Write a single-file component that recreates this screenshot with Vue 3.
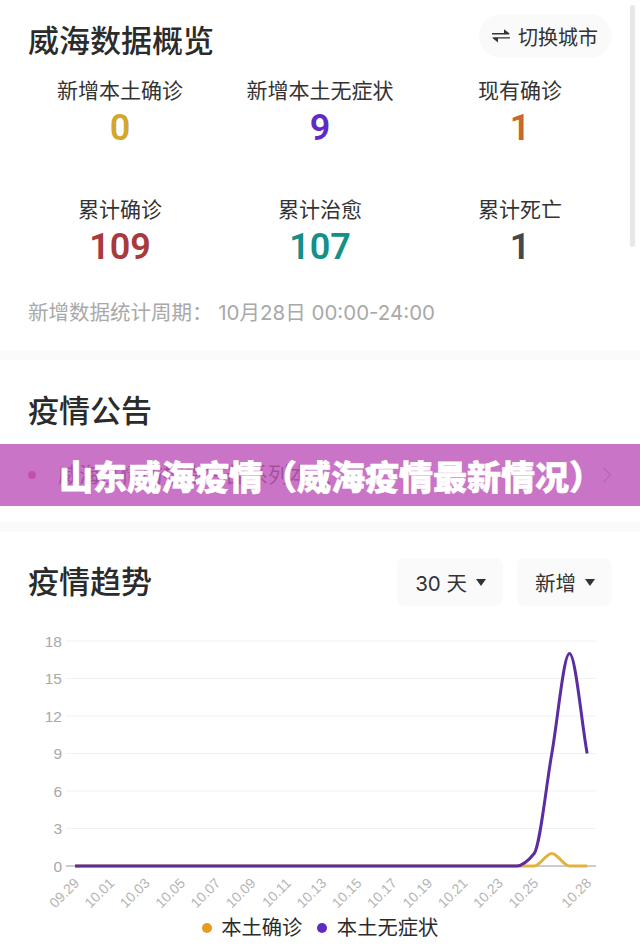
<template>
  <div class="page">
    <section class="overview">
      <div class="overview-head">
        <h2 class="head-title">威海数据概览</h2>
        <button class="switch-btn">
          <svg class="switch-icon" width="18" height="16" viewBox="0 0 18 16">
            <path d="M0 5h12V1.2L17.6 5.6 17 6.4H0z" fill="#333" />
            <path d="M18 10.6H6v3.8L.4 10 1 9.2h17z" fill="#333" />
          </svg>
          <span>切换城市</span>
        </button>
      </div>
      <div class="stats">
        <div v-for="item in stats" :key="item.label" class="stat">
          <span class="stat-label">{{ item.label }}</span>
          <span class="stat-value" :style="{ color: item.color }">{{ item.value }}</span>
        </div>
      </div>
      <p class="period">新增数据统计周期： 10月28日 00:00-24:00</p>
    </section>

    <section class="notice">
      <h2 class="head-title plain">疫情公告</h2>
      <div class="notice-row">
        <i class="notice-dot"></i>
        <span class="notice-text">威海疫情防控指挥部系列本土</span>
        <svg class="notice-arrow" width="10" height="18" viewBox="0 0 10 18">
          <path d="M1.5 2l7 7-7 7" fill="none" stroke="#999" stroke-width="1.5" />
        </svg>
      </div>
    </section>

    <section class="trend">
      <div class="trend-head">
        <h2 class="head-title plain">疫情趋势</h2>
        <div class="filters">
          <div class="filter"><span>30 天</span><i class="caret"></i></div>
          <div class="filter"><span>新增</span><i class="caret"></i></div>
        </div>
      </div>
      <svg class="chart" width="640" height="307" viewBox="0 606 640 307">
        <g v-for="tick in yTicks" :key="tick">
          <line x1="66" x2="596" :y1="toY(tick)" :y2="toY(tick)" :stroke="tick === 0 ? '#999' : '#f1f1f1'" stroke-width="1" />
          <text class="y-label" x="62" :y="toY(tick) + 5.5" text-anchor="end">{{ tick }}</text>
        </g>
        <text
          v-for="tick in xTicks"
          :key="tick.label"
          class="x-label"
          text-anchor="end"
          :transform="`translate(${toX(tick.index) + 5} 884) rotate(-45)`"
        >{{ tick.label }}</text>
        <path :d="orangePath" fill="none" stroke="#e3b23c" stroke-width="3" />
        <path :d="purplePath" fill="none" stroke="#5b2da3" stroke-width="3" />
      </svg>
      <div class="legend">
        <div class="legend-item"><i class="legend-dot orange"></i>本土确诊</div>
        <div class="legend-item"><i class="legend-dot purple"></i>本土无症状</div>
      </div>
    </section>

    <div class="scroll-thumb"></div>
    <div class="banner">山东威海疫情（威海疫情最新情况）</div>
  </div>
</template>

<script setup>
const stats = [
  { label: '新增本土确诊', value: '0', color: '#d4a72c' },
  { label: '新增本土无症状', value: '9', color: '#5f2bc4' },
  { label: '现有确诊', value: '1', color: '#c8682c' },
  { label: '累计确诊', value: '109', color: '#a83a3e' },
  { label: '累计治愈', value: '107', color: '#148f8a' },
  { label: '累计死亡', value: '1', color: '#44474c' },
]

const yTicks = [18, 15, 12, 9, 6, 3, 0]

const xTicks = [
  '09.29', '10.01', '10.03', '10.05', '10.07', '10.09', '10.11', '10.13',
  '10.15', '10.17', '10.19', '10.21', '10.23', '10.25',
].map((label, i) => ({ label, index: i * 2 }))
xTicks.push({ label: '10.28', index: 29 })

const toX = (i) => 75 + i * 17.66
const toY = (v) => 866 - v * 12.5

// 30 days, only the last few are non-zero
const series = (tail) => {
  const zeros = new Array(30 - tail.length).fill(0)
  return zeros.concat(tail)
}

// monotone cubic so the flat part stays flat
const smooth = (values) => {
  const slopes = values.slice(1).map((v, i) => v - values[i])
  const tangents = values.map((_, i) => {
    if (i === 0) return slopes[0]
    if (i === values.length - 1) return slopes[i - 1]
    const a = slopes[i - 1]
    const b = slopes[i]
    if (a * b <= 0) return 0
    return (2 * a * b) / (a + b)
  })
  let d = `M${toX(0)} ${toY(values[0])}`
  for (let i = 0; i < values.length - 1; i++) {
    const c1 = values[i] + tangents[i] / 3
    const c2 = values[i + 1] - tangents[i + 1] / 3
    d += `C${toX(i + 1 / 3)} ${toY(c1)} ${toX(i + 2 / 3)} ${toY(c2)} ${toX(i + 1)} ${toY(values[i + 1])}`
  }
  return d
}

const orangePath = smooth(series([0, 1, 0, 0]))
const purplePath = smooth(series([0, 1, 9, 17, 9]))
</script>

<style scoped>
.page {
  position: relative;
  width: 640px;
  height: 950px;
  overflow: hidden;
  background: #fff;
  color: #333;
  font-family: Inter, "Noto Sans CJK SC", sans-serif;
}

.overview {
  padding: 14px 28px 22px;
  border-bottom: 10px solid #fafafa;
}

.overview-head {
  display: flex;
  justify-content: space-between;
  align-items: flex-start;
}

.head-title {
  margin: 5px 0 0;
  font-size: 31px;
  line-height: 44px;
  font-weight: 500;
  color: #2b2b2b;
}

.head-title.plain {
  margin: 0;
}

.switch-btn {
  display: flex;
  align-items: center;
  gap: 8px;
  height: 44px;
  padding: 0 14px 0 13px;
  border: 0;
  border-radius: 22px;
  background: #fafafa;
  color: #333;
  font-family: inherit;
  font-size: 20px;
}

.stats {
  display: grid;
  grid-template-columns: repeat(3, 1fr);
  row-gap: 47px;
  margin: 13px -8px 0;
}

.stat {
  display: flex;
  flex-direction: column;
  align-items: center;
}

.stat-label {
  font-size: 21px;
  line-height: 30px;
  color: #333;
}

.stat-value {
  font-family: Roboto, sans-serif;
  font-size: 36px;
  line-height: 42px;
  font-weight: 600;
  padding-top: 1px;
  margin-bottom: -1px;
}

.period {
  margin: 31px 0 0;
  font-size: 20.5px;
  line-height: 30px;
  color: #a9a9a9;
}

.notice {
  padding: 29px 28px 32px;
  border-bottom: 10px solid #fafafa;
}

.notice-row {
  display: flex;
  align-items: center;
  margin-top: 27px;
  height: 30px;
}

.notice-dot {
  width: 8px;
  height: 8px;
  border-radius: 50%;
  background: #e8103c;
}

.notice-text {
  margin-left: 22px;
  font-size: 21px;
  line-height: 30px;
  color: #000;
}

.notice-arrow {
  margin-left: auto;
}

.trend-head {
  display: flex;
  justify-content: space-between;
  align-items: center;
  padding: 26px 28px 0;
}

.filters {
  display: flex;
  gap: 14px;
}

.filter {
  display: flex;
  align-items: center;
  gap: 9px;
  height: 48px;
  padding: 0 17px 0 18px;
  border-radius: 8px;
  background: #fafafa;
  font-size: 20.5px;
  color: #333;
}

.caret {
  width: 0;
  height: 0;
  border-left: 5.5px solid transparent;
  border-right: 5.5px solid transparent;
  border-top: 7px solid #333;
}

.chart {
  display: block;
}

.y-label {
  font-family: "Liberation Sans", sans-serif;
  font-size: 15.5px;
  fill: #a8a8a8;
}

.x-label {
  font-family: "Liberation Sans", sans-serif;
  font-size: 14px;
  fill: #b4b4b4;
}

.legend {
  display: flex;
  justify-content: center;
  gap: 15px;
  height: 30px;
  font-size: 20.3px;
  line-height: 30px;
  color: #2b2b2b;
}

.legend-item {
  display: flex;
  align-items: center;
  gap: 9.5px;
}

.legend-dot {
  width: 10px;
  height: 10px;
  border-radius: 50%;
}

.legend-dot.orange {
  background: #e89a1c;
}

.legend-dot.purple {
  background: #5f2bc4;
}

.scroll-thumb {
  position: absolute;
  top: 5px;
  right: 5px;
  width: 5px;
  height: 242px;
  border-radius: 3px;
  background: #e8e8e8;
}

.banner {
  position: absolute;
  top: 444px;
  left: 0;
  right: 0;
  height: 62px;
  display: flex;
  align-items: center;
  justify-content: center;
  padding-left: 22px;
  background: rgba(191, 92, 188, 0.85);
  color: #fff;
  font-size: 34px;
  font-weight: 900;
  -webkit-text-stroke: 0.6px #fff;
  white-space: nowrap;
}
</style>
